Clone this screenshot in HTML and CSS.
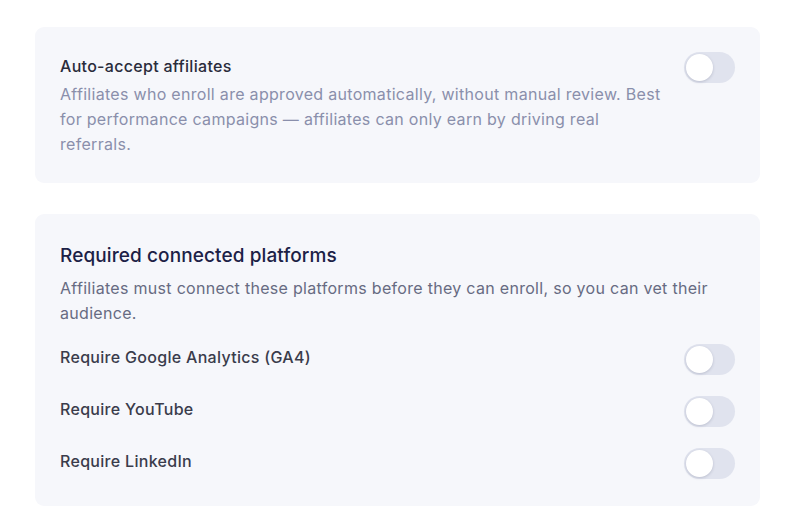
FILE: index.html
```html
<!DOCTYPE html>
<html>
  <head>
    <meta name="viewport" content="width=device-width, initial-scale=1" />
    <link rel="stylesheet" href="styles.css">
  </head>
  <body>
    <div class="page">
      <div class="card card-setting">
        <div class="setting">
          <div class="setting-text">
            <div class="setting-title">Auto-accept affiliates</div>
            <div class="setting-desc">
              Affiliates who enroll are approved automatically, without manual review. Best<br />
              for performance campaigns — affiliates can only earn by driving real<br />
              referrals.
            </div>
          </div>
          <label class="toggle"><input type="checkbox" /><span class="knob"></span></label>
        </div>
      </div>

      <div class="card card-section">
        <div class="section-title">Required connected platforms</div>
        <div class="section-desc">
          Affiliates must connect these platforms before they can enroll, so you can vet their<br />
          audience.
        </div>
        <div class="row">
          <span class="row-label">Require Google Analytics (GA4)</span>
          <label class="toggle"><input type="checkbox" /><span class="knob"></span></label>
        </div>
        <div class="row">
          <span class="row-label">Require YouTube</span>
          <label class="toggle"><input type="checkbox" /><span class="knob"></span></label>
        </div>
        <div class="row">
          <span class="row-label">Require LinkedIn</span>
          <label class="toggle"><input type="checkbox" /><span class="knob"></span></label>
        </div>
      </div>
    </div>
  </body>
</html>
```

FILE: styles.css
```css
body {
  margin: 0;
  background: #ffffff;
  font-family: Inter, "Noto Sans", sans-serif;
}

.page {
  width: 725px;
  margin-left: 35px;
  padding-top: 27px;
  display: flex;
  flex-direction: column;
  gap: 31px;
}

.card {
  background: #f6f7fb;
  border-radius: 9px;
  padding: 29px 25px 26px 25px;
}

.card-section {
  padding-top: 30px;
  padding-bottom: 27px;
}

.setting {
  display: flex;
  justify-content: space-between;
  align-items: flex-start;
}

.setting-title {
  font-size: 16px;
  font-weight: 500;
  line-height: 20px;
  letter-spacing: 0.3px;
  color: #2a2c3b;
}

.setting-desc {
  margin-top: 6px;
  font-size: 16px;
  line-height: 25px;
  letter-spacing: 0.3px;
  color: #8a8fab;
}

.section-title {
  font-size: 19px;
  font-weight: 500;
  line-height: 24px;
  letter-spacing: 0.1px;
  color: #1c2146;
}

.section-desc {
  margin-top: 8px;
  font-size: 16px;
  line-height: 25px;
  letter-spacing: 0.3px;
  color: #676b82;
}

.row {
  display: flex;
  justify-content: space-between;
  align-items: center;
  margin-top: 18px;
}

.row + .row {
  margin-top: 21px;
}

.row-label {
  font-size: 16px;
  font-weight: 500;
  letter-spacing: 0.3px;
  color: #3a3c4b;
  margin-top: -6px;
}

.toggle {
  position: relative;
  display: inline-block;
  width: 51px;
  height: 31px;
  flex-shrink: 0;
  margin-top: -4px;
}

.row .toggle {
  margin-top: 0;
}

.toggle input {
  opacity: 0;
  width: 0;
  height: 0;
}

.knob {
  position: absolute;
  inset: 0;
  background: #e0e3ee;
  border-radius: 16px;
  cursor: pointer;
}

.knob::before {
  content: "";
  position: absolute;
  left: 2px;
  top: 2px;
  width: 27px;
  height: 27px;
  border-radius: 50%;
  background: #ffffff;
  box-shadow: 0 1px 3px rgba(40, 45, 80, 0.2);
}
```
